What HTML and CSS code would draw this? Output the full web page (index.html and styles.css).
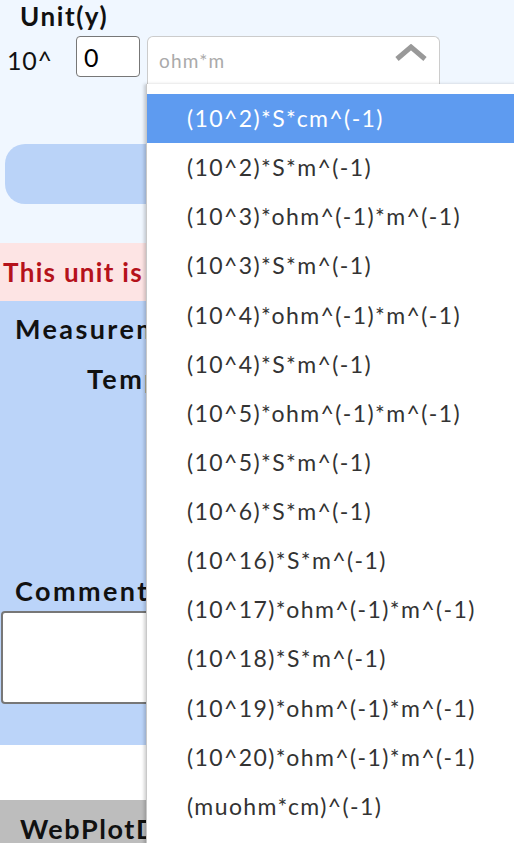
FILE: index.html
```html
<!DOCTYPE html>
<html>
<head>
<meta charset="utf-8">
<link rel="stylesheet" href="styles.css">
</head>
<body>
<div class="page">
  <section class="unit-block">
    <div class="unit-title">Unit(y)</div>
    <div class="unit-row">
      <span class="pow">10^</span>
      <input class="exp" type="text" value="0">
      <div class="select-wrap">
        <div class="select-box">
          <span class="placeholder">ohm*m</span>
          <svg class="chev" width="34" height="20" viewBox="0 0 34 20"><polyline points="3,15 17,3 31,15" fill="none" stroke="#999" stroke-width="5"/></svg>
        </div>
      </div>
    </div>
    <div class="pill"></div>
  </section>
  <div class="warning">This unit is not recognized</div>
  <section class="measure">
    <div class="m-title">Measurement</div>
    <div class="m-sub">Temperature</div>
    <div class="comment-label">Comments</div>
    <textarea class="comment"></textarea>
  </section>
  <div class="gap"></div>
  <div class="footer">WebPlotDigitizer</div>

  <ul class="menu">
    <li class="active">(10^2)*S*cm^(-1)</li>
    <li>(10^2)*S*m^(-1)</li>
    <li>(10^3)*ohm^(-1)*m^(-1)</li>
    <li>(10^3)*S*m^(-1)</li>
    <li>(10^4)*ohm^(-1)*m^(-1)</li>
    <li>(10^4)*S*m^(-1)</li>
    <li>(10^5)*ohm^(-1)*m^(-1)</li>
    <li>(10^5)*S*m^(-1)</li>
    <li>(10^6)*S*m^(-1)</li>
    <li>(10^16)*S*m^(-1)</li>
    <li>(10^17)*ohm^(-1)*m^(-1)</li>
    <li>(10^18)*S*m^(-1)</li>
    <li>(10^19)*ohm^(-1)*m^(-1)</li>
    <li>(10^20)*ohm^(-1)*m^(-1)</li>
    <li>(muohm*cm)^(-1)</li>
  </ul>
</div>
</body>
</html>
```
FILE: styles.css
```css
html, body {
  margin: 0;
  padding: 0;
  height: 843px;
  overflow: hidden;
  background: #ffffff;
}
body {
  font-family: Lato, "Noto Sans", sans-serif;
  color: #111;
}
.page {
  position: relative;
  width: 514px;
  height: 843px;
  overflow: hidden;
}
.unit-block {
  background: #f0f7ff;
  height: 243px;
  box-sizing: border-box;
}
.unit-title {
  font-weight: 700;
  font-size: 26px;
  line-height: 32px;
  padding-left: 20px;
  letter-spacing: 1.6px;
}
.unit-row {
  display: flex;
  align-items: flex-start;
  margin-top: 4px;
}
.pow {
  font-size: 25px;
  line-height: 48px;
  margin-left: 7px;
  width: 69px;
  letter-spacing: 0.8px;
}
.exp {
  box-sizing: border-box;
  width: 64px;
  height: 41px;
  border: 1.5px solid #777;
  border-radius: 4px;
  font-family: Lato, sans-serif;
  font-size: 25px;
  padding: 0 0 0 7px;
  margin: 0;
  background: #fff;
  color: #000;
}
.select-wrap {
  margin-left: 7px;
}
.select-box {
  box-sizing: border-box;
  width: 293px;
  height: 50px;
  border: 1px solid #ccc;
  border-bottom: none;
  border-radius: 6px 6px 0 0;
  background: #fff;
  display: flex;
  align-items: flex-start;
  justify-content: space-between;
  padding: 12px 11px 0 11px;
}
.placeholder {
  font-size: 19px;
  color: #aaa;
  line-height: 24px;
  letter-spacing: 1.2px;
}
.chev {
  margin-top: -5px;
}
.pill {
  margin: 58px 0 0 5px;
  height: 60px;
  width: 600px;
  border-radius: 20px;
  background: #bad3f8;
}
.warning {
  background: #fde4e4;
  color: #b5121b;
  font-weight: 700;
  font-size: 26px;
  height: 58px;
  line-height: 58px;
  padding-left: 3px;
  white-space: nowrap;
  letter-spacing: 1.3px;
}
.measure {
  background: #bbd4f9;
  height: 444px;
  box-sizing: border-box;
  padding-top: 11px;
}
.m-title, .m-sub, .comment-label {
  font-weight: 700;
  font-size: 27px;
  line-height: 34px;
  white-space: nowrap;
  letter-spacing: 2.4px;
}
.m-title {
  padding-left: 15px;
}
.m-sub {
  padding-left: 87px;
  margin-top: 16px;
}
.comment-label {
  padding-left: 15px;
  margin-top: 178px;
}
.comment {
  display: block;
  box-sizing: border-box;
  margin: 3px 0 0 1px;
  width: 600px;
  height: 93px;
  border: 2px solid #777;
  border-radius: 4px;
  background: #fff;
  resize: none;
}
.gap {
  height: 55px;
  background: #fff;
}
.footer {
  background: #bdbdbd;
  height: 60px;
  font-weight: 700;
  font-size: 27px;
  padding: 12px 0 0 20px;
  box-sizing: border-box;
  white-space: nowrap;
  letter-spacing: 1.6px;
}
.menu {
  position: absolute;
  left: 146px;
  top: 84px;
  width: 380px;
  height: 800px;
  margin: 0;
  padding: 10px 0 0 0;
  list-style: none;
  background: #fff;
  border-left: 1px solid #c8c8c8;
  box-shadow: -2px 0 3px rgba(0,0,0,0.18);
  box-sizing: border-box;
}
.menu li {
  height: 49.14px;
  line-height: 49.14px;
  padding-left: 40px;
  font-size: 23px;
  letter-spacing: 1.4px;
  color: #333;
  white-space: nowrap;
}
.menu li.active {
  background: #5e9bf0;
  color: #fff;
}
```
